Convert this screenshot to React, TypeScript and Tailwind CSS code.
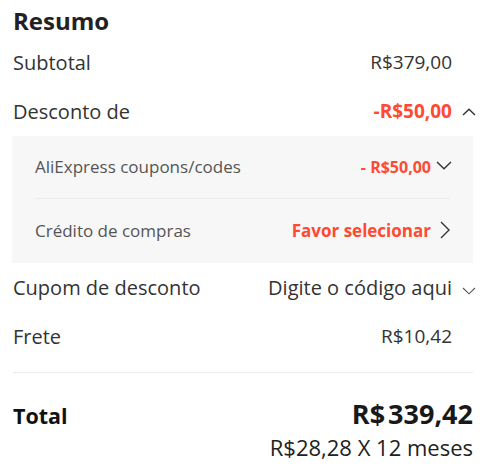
import React from "react";

const ChevUp = () => (
  <svg width="14" height="8" viewBox="0 0 14 8" className="block mr-[-3px]">
    <polyline points="1,7 7,1.2 13,7" fill="none" stroke="#333" strokeWidth="1.4" />
  </svg>
);

const ChevDownSmall = () => (
  <svg width="14" height="8" viewBox="0 0 14 8" className="block mr-[-3px] relative top-[3px]">
    <polyline points="1,1 7,6.8 13,1" fill="none" stroke="#555" strokeWidth="1.1" />
  </svg>
);

const ChevDown = () => (
  <svg width="16" height="9" viewBox="0 0 16 9" className="block relative top-[-2px]">
    <polyline points="1,1 8,7.8 15,1" fill="none" stroke="#333" strokeWidth="1.4" />
  </svg>
);

const ChevRight = () => (
  <svg width="10" height="18" viewBox="0 0 10 18" className="block mr-[2px] relative top-[-1px]">
    <polyline points="1,1 9,9 1,17" fill="none" stroke="#333" strokeWidth="1.4" />
  </svg>
);

export default function App() {
  return (
    <div className="w-[500px] h-[474px] bg-white font-['Open_Sans',sans-serif] pl-[13px] pr-[27px] overflow-hidden">
      <div className="pt-[3px] text-[24px] leading-[35px] font-bold text-[#222]">Resumo</div>

      <div className="h-[49px] flex items-center justify-between">
        <span className="text-[20px] text-[#333]">Subtotal</span>
        <div className="flex items-center">
          <span className="text-[19px] text-[#333]">R$379,00</span>
          <span className="w-[21px]" />
        </div>
      </div>

      <div className="h-[49px] flex items-center justify-between">
        <span className="text-[20px] text-[#333]">Desconto de</span>
        <div className="flex items-center">
          <span className="text-[19px] font-bold text-[#ff4a33]">-R$50,00</span>
          <span className="w-[21px] flex justify-end">
            <ChevUp />
          </span>
        </div>
      </div>

      <div className="ml-[-1px] bg-[#f7f7f7]">
        <div className="mx-[23px] h-[63px] flex items-center justify-between border-b border-[#ececec]">
          <span className="text-[17px] text-[#555]">AliExpress coupons/codes</span>
          <div className="flex items-center mr-[-2px]">
            <span className="text-[16px] font-bold text-[#ff4a33]">- R$50,00</span>
            <span className="w-[21px] flex justify-end">
              <ChevDown />
            </span>
          </div>
        </div>
        <div className="mx-[23px] h-[64px] flex items-center justify-between">
          <span className="text-[17px] text-[#555]">Crédito de compras</span>
          <div className="flex items-center mr-[-2px]">
            <span className="text-[17px] font-bold text-[#ff4a33]">Favor selecionar</span>
            <span className="w-[21px] flex justify-end">
              <ChevRight />
            </span>
          </div>
        </div>
      </div>

      <div className="h-[49px] flex items-center justify-between">
        <span className="text-[20px] text-[#333]">Cupom de desconto</span>
        <div className="flex items-center">
          <span className="text-[20px] text-[#333]">Digite o código aqui</span>
          <span className="w-[21px] flex justify-end">
            <ChevDownSmall />
          </span>
        </div>
      </div>

      <div className="h-[49px] flex items-center justify-between">
        <span className="text-[20px] text-[#333]">Frete</span>
        <div className="flex items-center">
          <span className="text-[19px] text-[#333]">R$10,42</span>
          <span className="w-[21px]" />
        </div>
      </div>

      <div className="mt-[11px] h-px bg-[#ececec]" />

      <div className="pt-[24px] flex items-baseline justify-between">
        <span className="text-[21.5px] font-bold text-[#111]">Total</span>
        <div className="flex flex-col items-end">
          <span className="text-[27px] leading-[34px] font-bold text-[#191919]">
            <span className="mr-[3px]">R$</span>339,42
          </span>
          <span className="mt-[1px] text-[22px] leading-[30px] text-[#222]">R$28,28 X 12 meses</span>
        </div>
      </div>
    </div>
  );
}
